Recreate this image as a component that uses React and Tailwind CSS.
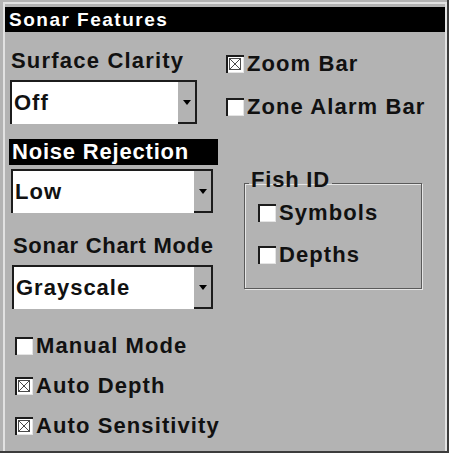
import React from 'react';

const CheckBox = ({ checked }) => (
  <svg width="18" height="18" viewBox="0 0 18 18" className="shrink-0">
    <rect x="0" y="0" width="18" height="18" fill="#ffffff" />
    <rect x="0" y="0" width="18" height="2" fill="#1c1c1c" />
    <rect x="0" y="0" width="2" height="18" fill="#1c1c1c" />
    <rect x="17" y="2" width="1" height="16" fill="#e4e4e4" />
    <rect x="2" y="17" width="16" height="1" fill="#e4e4e4" />
    {checked && (
      <g stroke="#4a4a4a" strokeWidth="1" fill="none">
        <rect x="3.5" y="3.5" width="11" height="11" />
        <path d="M3.5 3.5 L14.5 14.5 M14.5 3.5 L3.5 14.5" />
      </g>
    )}
  </svg>
);

const CheckRow = ({ label, checked, className }) => (
  <div className={`flex items-center h-[18px] ${className}`}>
    <CheckBox checked={checked} />
    <span className="ml-[3px] text-[22px] leading-none tracking-[1.1px] text-[#111]">{label}</span>
  </div>
);

const Dropdown = ({ value, className }) => (
  <div className={`flex h-[44px] bg-white border-t-2 border-l-2 border-[#1c1c1c] ${className}`}>
    <div className="flex-1 flex items-center pl-[2px] text-[22px] leading-none tracking-[1px] text-[#111]">
      {value}
    </div>
    <div className="w-[19px] bg-[#b3b3b3] border-r-2 border-b-2 border-[#1c1c1c] flex items-center justify-center">
      <svg width="8" height="5" viewBox="0 0 8 5">
        <polygon points="0,0 8,0 4,5" fill="#000" />
      </svg>
    </div>
  </div>
);

const App = () => {
  return (
    <div className="w-[449px] h-[453px] bg-[#b3b3b3] border-r-2 border-b-2 border-[#3c3c3c] pt-[2px] pl-[3px] font-['Liberation_Sans',Arial,sans-serif] font-bold select-none">
      <div className="h-full border-t-2 border-l-2 border-r-2 border-[#e2e2e2] pt-[3px]">
        {/* Title bar */}
        <div className="h-[25px] bg-black flex items-center pl-[4px]">
          <span className="text-white text-[19px] leading-none tracking-[1.5px]">Sonar Features</span>
        </div>

        <div className="flex">
          {/* Left column */}
          <div className="w-[221px] pl-[4px] flex flex-col items-start">
            <div className="mt-[18px] ml-[2px] text-[22px] leading-none tracking-[1.2px] text-[#111]">Surface Clarity</div>
            <Dropdown value="Off" className="mt-[8px] ml-[1px] w-[187px]" />

            <div className="mt-[15px] w-[209px] h-[26px] bg-black flex items-center pl-[3px]">
              <span className="text-white text-[22px] leading-none tracking-[0.8px]">Noise Rejection</span>
            </div>
            <Dropdown value="Low" className="mt-[4px] ml-[2px] w-[202px]" />

            <div className="mt-[22px] ml-[4px] text-[22px] leading-none tracking-[0.7px] text-[#111]">Sonar Chart Mode</div>
            <Dropdown value="Grayscale" className="mt-[8px] ml-[3px] w-[201px]" />

            <CheckRow label="Manual Mode" className="mt-[28px] ml-[6px]" />
            <CheckRow label="Auto Depth" checked className="mt-[22px] ml-[6px]" />
            <CheckRow label="Auto Sensitivity" checked className="mt-[22px] ml-[6px]" />
          </div>

          {/* Right column */}
          <div className="flex flex-col items-start">
            <CheckRow label="Zoom Bar" checked className="mt-[23px]" />
            <CheckRow label="Zone Alarm Bar" className="mt-[25px]" />

            <fieldset className="mt-[53px] ml-[18px] w-[178px] border border-[#5a5a5a] shadow-[inset_1px_1px_0_#e6e6e6,1px_1px_0_#e6e6e6] pb-[24px]">
              <legend className="ml-[4px] px-[2px] pb-[6px] text-[22px] leading-none tracking-[0.8px] text-[#111]">Fish ID</legend>
              <div className="pl-[13px]">
                <CheckRow label="Symbols" className="mt-[7px]" />
                <CheckRow label="Depths" className="mt-[24px]" />
              </div>
            </fieldset>
          </div>
        </div>
      </div>
    </div>
  );
};

export default App;
